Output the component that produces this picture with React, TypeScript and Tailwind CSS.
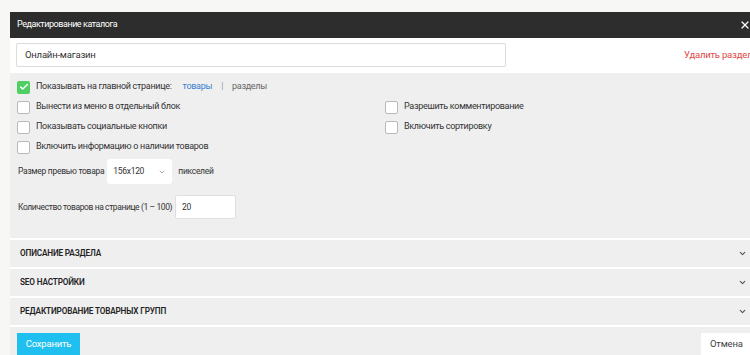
import { ChevronDown, X, Check } from 'lucide-react';

function Box({ checked }: { checked?: boolean }) {
  if (checked) {
    return (
      <span className="w-[13px] h-[13px] rounded-[2px] bg-[#4fcf63] flex items-center justify-center shrink-0">
        <Check size={10} className="text-white" strokeWidth={3.5} />
      </span>
    );
  }
  return <span className="w-[13px] h-[13px] rounded-[2px] bg-white border border-[#b9b9b9] shrink-0" />;
}

function Row({ label, checked, children }: { label: string; checked?: boolean; children?: React.ReactNode }) {
  return (
    <div className="h-[20px] flex items-center gap-[6px]">
      <Box checked={checked} />
      <span>{label}</span>
      {children}
    </div>
  );
}

const sections = ['Описание раздела', 'SEO настройки', 'Редактирование товарных групп'];

export default function App() {
  return (
    <div
      className="w-[750px] h-[355px] overflow-hidden bg-[#f7f7f5] pt-[12px] pl-[10px] text-[#333] text-[9px] tracking-[-0.3px]"
      style={{ fontFamily: 'Roboto, "Liberation Sans", sans-serif' }}
    >
      <div className="w-[755px] h-[343px] flex flex-col bg-[#efefef]">
        {/* Header */}
        <div className="h-[26px] bg-[#2d2d2d] flex items-center justify-between pl-[7px] pr-[14px] text-white text-[9px] tracking-[-0.45px]">
          <span>Редактирование каталога</span>
          <X size={12} strokeWidth={2.5} />
        </div>

        {/* Name */}
        <div className="h-[36px] bg-white flex items-center pl-[6px] text-[9.5px] tracking-[-0.2px]">
          <div className="w-[490px] h-[24px] border border-[#dcdcdc] rounded-[2px] flex items-center px-[8px]">
            Онлайн-магазин
          </div>
          <span className="ml-[178px] text-[#e04848] whitespace-nowrap">Удалить раздел</span>
        </div>

        {/* Options */}
        <div className="pt-[4px] pl-[7px]">
          <div className="grid grid-cols-[368px_1fr]">
            <div className="col-span-2">
              <Row label="Показывать на главной странице:" checked>
                <span className="ml-[5px] text-[#3b7fd0]">товары</span>
                <span className="mx-[3px] text-[#999]">|</span>
                <span className="text-[#666]">разделы</span>
              </Row>
            </div>
            <Row label="Вынести из меню в отдельный блок" />
            <Row label="Разрешить комментирование" />
            <Row label="Показывать социальные кнопки" />
            <Row label="Включить сортировку" />
            <div className="col-span-2">
              <Row label="Включить информацию о наличии товаров" />
            </div>
          </div>

          <div className="mt-[2px] h-[25px] flex items-center text-[8.5px] tracking-[-0.3px]">
            <span className="ml-[1px]">Размер превью товара</span>
            <div className="ml-[3px] w-[65px] h-[25px] bg-white rounded-[3px] flex items-center px-[6px]">
              <span>156x120</span>
              <ChevronDown size={8} className="ml-auto text-[#aaa]" strokeWidth={3} />
            </div>
            <span className="ml-[6px]">пикселей</span>
          </div>

          <div className="mt-[11px] h-[24px] flex items-center text-[8.5px] tracking-[-0.4px]">
            <span className="ml-[1px]">Количество товаров на странице (1 – 100)</span>
            <div className="ml-[3px] w-[61px] h-[24px] bg-white rounded-[2px] border border-[#e0e0e0] flex items-center px-[6px]">
              20
            </div>
          </div>
        </div>

        {/* Sections */}
        <div className="mt-[19px] border-t-2 border-white">
          {sections.map((s) => (
            <div key={s} className="h-[29px] border-b-2 border-white flex items-center pl-[10px] pr-[18px]">
              <span className="uppercase font-semibold text-[8.2px] text-[#222] tracking-[-0.15px]">{s}</span>
              <ChevronDown size={9} className="ml-auto text-[#555]" strokeWidth={3} />
            </div>
          ))}
        </div>

        {/* Footer */}
        <div className="flex items-start pt-[6px] pl-[7px] text-[9.5px] tracking-[-0.2px]">
          <button className="h-[22px] w-[63px] bg-[#1fbff0] text-white">Сохранить</button>
          <button className="ml-auto h-[22px] w-[64px] bg-white text-[#444] text-left pl-[9px]">Отмена</button>
        </div>
      </div>
    </div>
  );
}
